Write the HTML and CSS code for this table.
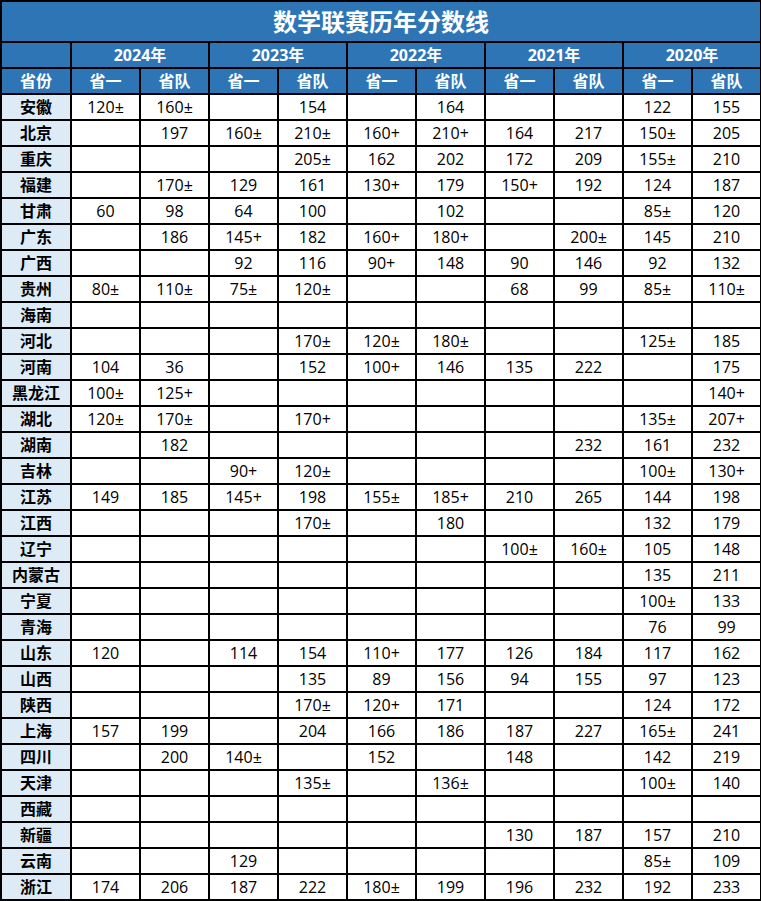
FILE: index.html
```html
<!DOCTYPE html>
<html lang="zh">
<head>
<meta charset="utf-8">
<link rel="stylesheet" href="styles.css">
</head>
<body>
<table class="score">
<colgroup>
<col class="c-prov"><col><col><col><col><col><col><col><col><col><col>
</colgroup>
<thead>
<tr class="r-title"><th colspan="11">数学联赛历年分数线</th></tr>
<tr class="r-year"><th></th><th colspan="2">2024年</th><th colspan="2">2023年</th><th colspan="2">2022年</th><th colspan="2">2021年</th><th colspan="2">2020年</th></tr>
<tr class="r-sub"><th>省份</th><th>省一</th><th>省队</th><th>省一</th><th>省队</th><th>省一</th><th>省队</th><th>省一</th><th>省队</th><th>省一</th><th>省队</th></tr>
</thead>
<tbody>
<tr><th>安徽</th><td>120±</td><td>160±</td><td></td><td>154</td><td></td><td>164</td><td></td><td></td><td>122</td><td>155</td></tr>
<tr><th>北京</th><td></td><td>197</td><td>160±</td><td>210±</td><td>160+</td><td>210+</td><td>164</td><td>217</td><td>150±</td><td>205</td></tr>
<tr><th>重庆</th><td></td><td></td><td></td><td>205±</td><td>162</td><td>202</td><td>172</td><td>209</td><td>155±</td><td>210</td></tr>
<tr><th>福建</th><td></td><td>170±</td><td>129</td><td>161</td><td>130+</td><td>179</td><td>150+</td><td>192</td><td>124</td><td>187</td></tr>
<tr><th>甘肃</th><td>60</td><td>98</td><td>64</td><td>100</td><td></td><td>102</td><td></td><td></td><td>85±</td><td>120</td></tr>
<tr><th>广东</th><td></td><td>186</td><td>145+</td><td>182</td><td>160+</td><td>180+</td><td></td><td>200±</td><td>145</td><td>210</td></tr>
<tr><th>广西</th><td></td><td></td><td>92</td><td>116</td><td>90+</td><td>148</td><td>90</td><td>146</td><td>92</td><td>132</td></tr>
<tr><th>贵州</th><td>80±</td><td>110±</td><td>75±</td><td>120±</td><td></td><td></td><td>68</td><td>99</td><td>85±</td><td>110±</td></tr>
<tr><th>海南</th><td></td><td></td><td></td><td></td><td></td><td></td><td></td><td></td><td></td><td></td></tr>
<tr><th>河北</th><td></td><td></td><td></td><td>170±</td><td>120±</td><td>180±</td><td></td><td></td><td>125±</td><td>185</td></tr>
<tr><th>河南</th><td>104</td><td>36</td><td></td><td>152</td><td>100+</td><td>146</td><td>135</td><td>222</td><td></td><td>175</td></tr>
<tr><th>黑龙江</th><td>100±</td><td>125+</td><td></td><td></td><td></td><td></td><td></td><td></td><td></td><td>140+</td></tr>
<tr><th>湖北</th><td>120±</td><td>170±</td><td></td><td>170+</td><td></td><td></td><td></td><td></td><td>135±</td><td>207+</td></tr>
<tr><th>湖南</th><td></td><td>182</td><td></td><td></td><td></td><td></td><td></td><td>232</td><td>161</td><td>232</td></tr>
<tr><th>吉林</th><td></td><td></td><td>90+</td><td>120±</td><td></td><td></td><td></td><td></td><td>100±</td><td>130+</td></tr>
<tr><th>江苏</th><td>149</td><td>185</td><td>145+</td><td>198</td><td>155±</td><td>185+</td><td>210</td><td>265</td><td>144</td><td>198</td></tr>
<tr><th>江西</th><td></td><td></td><td></td><td>170±</td><td></td><td>180</td><td></td><td></td><td>132</td><td>179</td></tr>
<tr><th>辽宁</th><td></td><td></td><td></td><td></td><td></td><td></td><td>100±</td><td>160±</td><td>105</td><td>148</td></tr>
<tr><th>内蒙古</th><td></td><td></td><td></td><td></td><td></td><td></td><td></td><td></td><td>135</td><td>211</td></tr>
<tr><th>宁夏</th><td></td><td></td><td></td><td></td><td></td><td></td><td></td><td></td><td>100±</td><td>133</td></tr>
<tr><th>青海</th><td></td><td></td><td></td><td></td><td></td><td></td><td></td><td></td><td>76</td><td>99</td></tr>
<tr><th>山东</th><td>120</td><td></td><td>114</td><td>154</td><td>110+</td><td>177</td><td>126</td><td>184</td><td>117</td><td>162</td></tr>
<tr><th>山西</th><td></td><td></td><td></td><td>135</td><td>89</td><td>156</td><td>94</td><td>155</td><td>97</td><td>123</td></tr>
<tr><th>陕西</th><td></td><td></td><td></td><td>170±</td><td>120+</td><td>171</td><td></td><td></td><td>124</td><td>172</td></tr>
<tr><th>上海</th><td>157</td><td>199</td><td></td><td>204</td><td>166</td><td>186</td><td>187</td><td>227</td><td>165±</td><td>241</td></tr>
<tr><th>四川</th><td></td><td>200</td><td>140±</td><td></td><td>152</td><td></td><td>148</td><td></td><td>142</td><td>219</td></tr>
<tr><th>天津</th><td></td><td></td><td></td><td>135±</td><td></td><td>136±</td><td></td><td></td><td>100±</td><td>140</td></tr>
<tr><th>西藏</th><td></td><td></td><td></td><td></td><td></td><td></td><td></td><td></td><td></td><td></td></tr>
<tr><th>新疆</th><td></td><td></td><td></td><td></td><td></td><td></td><td>130</td><td>187</td><td>157</td><td>210</td></tr>
<tr><th>云南</th><td></td><td></td><td>129</td><td></td><td></td><td></td><td></td><td></td><td>85±</td><td>109</td></tr>
<tr><th>浙江</th><td>174</td><td>206</td><td>187</td><td>222</td><td>180±</td><td>199</td><td>196</td><td>232</td><td>192</td><td>233</td></tr>
</tbody>
</table>
</body>
</html>
```
FILE: styles.css
```css
html, body {
  margin: 0;
  padding: 0;
  background: #ffffff;
}
.score {
  border-collapse: collapse;
  table-layout: fixed;
  width: 760px;
  font-family: "Open Sans", "Noto Sans CJK SC", sans-serif;
  font-size: 16px;
  color: #000;
}
.score col { width: 69px; }
.score col.c-prov { width: 70px; }
.score th, .score td {
  border: 2px solid #000;
  padding: 0;
  height: 24px;
  line-height: 22px;
  text-align: center;
  white-space: nowrap;
  overflow: hidden;
}
.score thead th {
  background: #2e75b6;
  color: #fff;
  font-weight: 700;
}
.score .r-title th {
  height: 39px;
  font-size: 24px;
  line-height: 37px;
}
.score tbody th {
  background: #ddebf7;
  font-weight: 700;
}
.score tbody td {
  font-weight: 400;
}
```
